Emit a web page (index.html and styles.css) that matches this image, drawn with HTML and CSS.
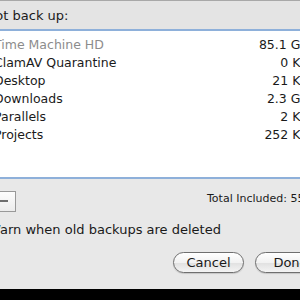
FILE: index.html
```html
<!DOCTYPE html>
<html lang="en">
<head>
    <meta charset="UTF-8">
    <title>Time Machine Options</title>
    <link rel="stylesheet" href="styles.css">
</head>
<body>
    <div class="sheet">
        <div class="header">Do not back up:</div>

        <div class="list">
            <div class="row disabled"><span class="name">Time Machine HD</span><span class="size">85.1 GB</span></div>
            <div class="row"><span class="name">ClamAV Quarantine</span><span class="size">0 KB</span></div>
            <div class="row"><span class="name">Desktop</span><span class="size">21 KB</span></div>
            <div class="row"><span class="name">Downloads</span><span class="size">2.3 GB</span></div>
            <div class="row"><span class="name">Parallels</span><span class="size">2 KB</span></div>
            <div class="row"><span class="name">Projects</span><span class="size">252 KB</span></div>
        </div>

        <div class="toolbar">
            <button class="minus-btn"><span class="minus"></span></button>
            <span class="total">Total Included: 55.2 GB</span>
        </div>

        <label class="warn">
            <input type="checkbox" checked>
            Warn when old backups are deleted
        </label>

        <div class="actions">
            <button class="pill">Cancel</button>
            <button class="pill">Done</button>
        </div>
    </div>
    <div class="bottom"></div>
</body>
</html>
```

FILE: styles.css
```css
body {
    margin: 0;
    width: 300px;
    height: 300px;
    overflow: hidden;
    background: #e8e8e8;
    font-family: "DejaVu Sans", sans-serif;
    color: #1a1a1a;
}

.sheet {
    height: 289px;
    display: flex;
    flex-direction: column;
    margin-left: -30px;
    width: 370px;
}

.header {
    height: 31px;
    box-sizing: border-box;
    border-top: 1px solid #a8a8a8;
    background: #e4e4e4;
    font-size: 13px;
    line-height: 30px;
    text-indent: -5px;
    border-bottom: 2px solid #8eb0da;
}

.list {
    background: #fff;
    height: 141px;
    padding-top: 5px;
    border-bottom: 2px solid #8eb0da;
}

.row {
    display: flex;
    justify-content: space-between;
    height: 18px;
    line-height: 18px;
    font-size: 12.5px;
    padding-left: 24px;
    padding-right: 31px;
}

.row.disabled {
    color: #8c8c8c;
}

.row.disabled .size {
    color: #1a1a1a;
}

.toolbar {
    display: flex;
    align-items: center;
    height: 30px;
    margin-top: 7px;
}

.minus-btn {
    width: 46px;
    height: 21px;
    border: 1px solid #999;
    background: linear-gradient(#fdfdfd, #ececec);
    padding: 0 0 0 29px;
    display: flex;
    align-items: center;
}

.minus {
    display: block;
    width: 8px;
    height: 2px;
    background: #6e6e6e;
}

.total {
    font-size: 11px;
    margin-left: 191px;
    margin-top: -6px;
}

.warn {
    display: flex;
    align-items: center;
    gap: 6px;
    font-size: 13px;
    height: 20px;
    margin-top: 3px;
    margin-left: -2px;
}

.warn input {
    margin: 0;
    width: 14px;
    height: 14px;
}

.actions {
    display: flex;
    gap: 11px;
    margin-top: 13px;
    padding-left: 203px;
}

.pill {
    width: 71px;
    height: 21px;
    border: 1px solid #6f6f6f;
    border-radius: 11px;
    background: linear-gradient(#ffffff, #f2f2f2 50%, #e0e0e0 51%, #f4f4f4);
    font-family: "DejaVu Sans", sans-serif;
    font-size: 13px;
    color: #1a1a1a;
    padding: 0;
    box-shadow: 0 1px 1px rgba(0, 0, 0, 0.15);
}

.bottom {
    height: 11px;
    background: #000;
}
```
